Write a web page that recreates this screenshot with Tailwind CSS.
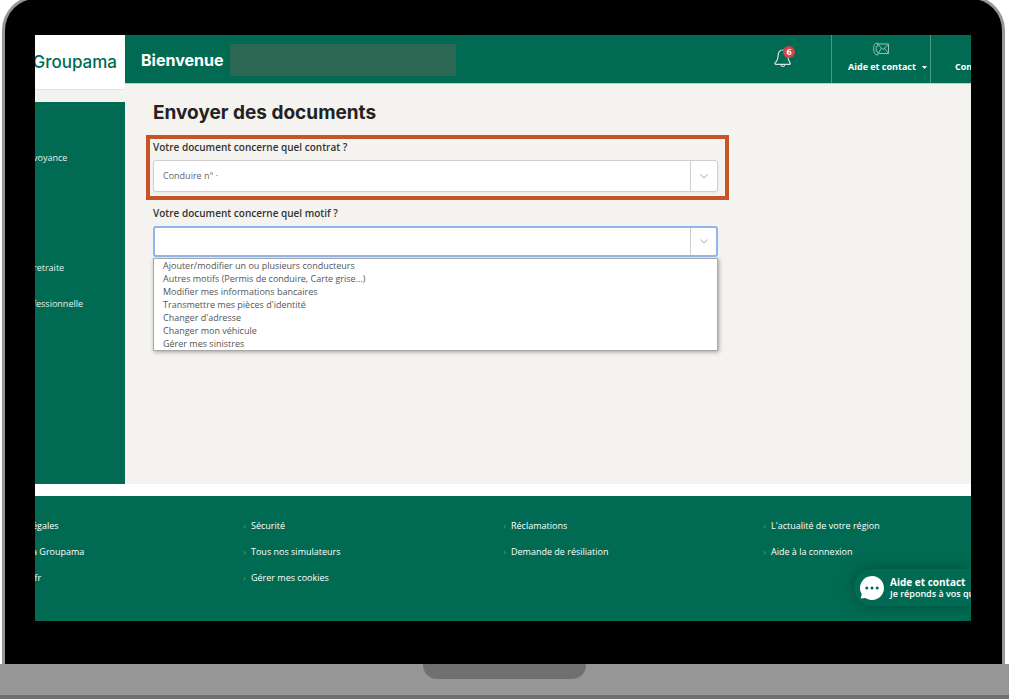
<!DOCTYPE html>
<html lang="fr">
<head>
    <meta charset="UTF-8">
    <meta name="viewport" content="width=device-width, initial-scale=1.0">
    <title>Groupama - Envoyer des documents</title>
    <script src="https://cdn.jsdelivr.net/npm/@tailwindcss/browser@4"></script>
</head>
<body class="bg-white overflow-hidden font-['Open_Sans',sans-serif] text-[10px] leading-4">

    <!-- Laptop lid -->
    <div class="ml-[2px] mr-1 -mt-1 rounded-t-[34px] border-x-[3px] border-t-[3px] border-[#979797] bg-black pl-[30px] pr-[31px] pt-9 pb-[43px]">

        <div class="relative overflow-hidden bg-white">
            <div class="flex min-h-[449px] bg-[#f5f3ef]">

                <aside class="w-[90px] shrink-0 flex flex-col">
                    <a href="#" class="h-[55px] bg-white border-b border-[#e4e2de] flex items-center justify-end pr-2 font-[Inter,sans-serif] text-[17px] font-medium text-[#006b52]">Groupama</a>
                    <nav class="mt-3 flex-1 bg-[#006b52] pt-12 text-[9px] text-white/90">
                        <ul class="-ml-[2px]">
                            <li class="mb-[94px]"><a href="#">voyance</a></li>
                            <li class="mb-5"><a href="#">retraite</a></li>
                            <li><a href="#">fessionnelle</a></li>
                        </ul>
                    </nav>
                </aside>

                <div class="flex-1 min-w-0">
                    <header class="h-[49px] bg-[#006b52] border-b border-[#b5d3ca] flex items-stretch pl-4 text-white">
                        <div class="flex items-center gap-[7px] pt-px">
                            <span class="font-[Inter,sans-serif] text-base font-bold">Bienvenue</span>
                            <span class="w-[226px] h-8 bg-[#2c6853]"></span>
                        </div>
                        <div class="ml-auto flex items-stretch">
                            <button type="button" aria-label="Notifications" class="relative w-[57px] flex items-center">
                                <svg class="w-[18px] h-5" viewBox="0 0 18 20" fill="none" stroke="#cfe6df" stroke-width="1.2" stroke-linecap="round" stroke-linejoin="round">
                                    <path d="M9 1C5.600 1 4.200 3.600 4.200 6.500C4.200 11 2.500 12.200 1 14.200C.8 14.800 1.200 15.300 1.800 15.300H15.600C16.200 15.300 16.500 14.800 16.200 14.200C15 12.300 13.800 11 13.800 6.500C13.800 3.600 12.300 1 9 1Z"/>
                                    <path d="M7 16C7.300 18 10.300 18 10.700 16"/>
                                </svg>
                                <span class="absolute left-[9px] top-[11px] size-3 rounded-full bg-[#d2434b] text-[9px] leading-3 font-bold">6</span>
                            </button>
                            <button type="button" class="w-[100px] border-x border-[#4d9786] flex flex-col items-center pt-[7px] text-[9px] font-bold">
                                <svg class="w-4 h-[14px]" viewBox="0 0 16 14" fill="none" stroke="#9fd0c2" stroke-width="0.9" stroke-linejoin="round">
                                    <path d="M4.500 2H15.500V11.500H6"/>
                                    <path d="M5 2.500L10 7.500L15.200 2.500M5.500 11L8.300 6.300M15.200 11L11.500 6.300"/>
                                    <path d="M4.500 1C2 .8.7 3 .7 6.800C.7 10.500 2 13.200 4.700 13L5.300 10.200L3.500 9.500C3 8 3 6 3.500 4.500L5.200 3.800L4.500 1Z"/>
                                </svg>
                                <span class="mt-[3px] flex w-full items-center pl-4">Aide et contact
                                    <svg class="ml-auto mr-[3px] w-[5px] h-[3px]" viewBox="0 0 5 3" fill="white"><path d="M0 0H5L2.500 3Z"/></svg>
                                </span>
                            </button>
                            <button type="button" class="w-10 overflow-hidden pl-6 pt-[15px] text-left text-[9px] font-bold">Connexion</button>
                        </div>
                    </header>

                    <main class="max-w-[604px] pt-4 pl-[21px] text-[#333]">
                        <h1 class="ml-[7px] h-[26px] leading-[26px] font-[Inter,sans-serif] text-[19px] font-bold text-[#222]">Envoyer des documents</h1>

                        <form>
                            <div class="mt-[9px] border-4 border-[#c55527] pl-[3px] pr-[7px] pb-1">
                                <label for="contrat" class="block mb-1 leading-[17px] font-semibold">Votre document concerne quel contrat ?</label>
                                <div class="relative">
                                    <select id="contrat" class="block w-full h-8 appearance-none rounded-[3px] border border-[#cfcfcf] bg-white pl-[9px] text-[9px] text-[#666] shadow-xs">
                                        <option>Conduire n° ·</option>
                                    </select>
                                    <span class="pointer-events-none absolute inset-y-px right-px w-[27px] border-l border-[#cfcfcf] flex items-center justify-center">
                                        <svg class="w-2 h-[5px]" viewBox="0 0 8 5" fill="none" stroke="#c4c4c4" stroke-width="1.100"><path d="M.5.5L4 4L7.500.5"/></svg>
                                    </span>
                                </div>
                            </div>

                            <div class="mt-[5px] pl-[7px] pr-[11px]">
                                <label for="motif" class="block mb-1 leading-[17px] font-semibold">Votre document concerne quel motif ?</label>
                                <div class="relative">
                                    <select id="motif" class="block w-full h-[31px] appearance-none rounded-[3px] border-2 border-[#8fb4ee] bg-white pl-2 text-[9px] text-[#666]">
                                        <option></option>
                                    </select>
                                    <span class="pointer-events-none absolute inset-y-[2px] right-px w-[27px] border-l border-[#cfcfcf] flex items-center justify-center">
                                        <svg class="w-2 h-[5px]" viewBox="0 0 8 5" fill="none" stroke="#c4c4c4" stroke-width="1.100"><path d="M.5.5L4 4L7.500.5"/></svg>
                                    </span>
                                </div>
                                <ul role="listbox" aria-label="Motifs" class="mt-px border border-[#a9aaa6] bg-white pl-[9px] text-[9px] leading-[13px] text-[#555] shadow-[1px_1px_4px_rgba(0,0,0,0.35)]">
                                    <li role="option">Ajouter/modifier un ou plusieurs conducteurs</li>
                                    <li role="option">Autres motifs (Permis de conduire, Carte grise...)</li>
                                    <li role="option">Modifier mes informations bancaires</li>
                                    <li role="option">Transmettre mes pièces d'identité</li>
                                    <li role="option">Changer d'adresse</li>
                                    <li role="option">Changer mon véhicule</li>
                                    <li role="option">Gérer mes sinistres</li>
                                </ul>
                            </div>
                        </form>
                    </main>
                </div>
            </div>

            <footer class="mt-3 h-[125px] bg-[#006b52] pt-[22px] text-[9px] text-white">
                <div class="-mx-[52px] grid grid-cols-4">
                    <ul class="pl-[49px] space-y-[10px]">
                        <li><a href="#">égales</a></li>
                        <li><a href="#">a Groupama</a></li>
                        <li><a href="#">.fr</a></li>
                    </ul>
                    <ul class="space-y-[10px]">
                        <li class="flex"><span class="w-2 text-[#8a8a3c]">›</span><a href="#">Sécurité</a></li>
                        <li class="flex"><span class="w-2 text-[#8a8a3c]">›</span><a href="#">Tous nos simulateurs</a></li>
                        <li class="flex"><span class="w-2 text-[#8a8a3c]">›</span><a href="#">Gérer mes cookies</a></li>
                    </ul>
                    <ul class="space-y-[10px]">
                        <li class="flex"><span class="w-2 text-[#8a8a3c]">›</span><a href="#">Réclamations</a></li>
                        <li class="flex"><span class="w-2 text-[#8a8a3c]">›</span><a href="#">Demande de résiliation</a></li>
                    </ul>
                    <ul class="space-y-[10px]">
                        <li class="flex"><span class="w-2 text-[#8a8a3c]">›</span><a href="#">L'actualité de votre région</a></li>
                        <li class="flex"><span class="w-2 text-[#8a8a3c]">›</span><a href="#">Aide à la connexion</a></li>
                    </ul>
                </div>
            </footer>

            <!-- Chat button -->
            <button type="button" class="absolute right-0 bottom-[15px] w-[117px] h-[37px] rounded-l-full bg-[#006b52] shadow-[0_0_14px_rgba(0,50,38,0.5)] pl-[6px] flex items-center gap-[6px] text-left text-white whitespace-nowrap">
                <svg class="size-6 shrink-0" viewBox="0 0 24 24">
                    <path fill="white" d="M12 0A12 12 0 1 1 5.500 22.100L.6 22.500L1.800 18.300A12 12 0 0 1 12 0Z"/>
                    <g fill="#006b52"><circle cx="6.800" cy="12" r="1.500"/><circle cx="12" cy="12" r="1.500"/><circle cx="17.200" cy="12" r="1.500"/></g>
                </svg>
                <span class="leading-3">
                    <span class="block text-[10px] font-bold">Aide et contact</span>
                    <span class="block text-[9px] font-semibold">Je réponds à vos questions</span>
                </span>
            </button>
        </div>
    </div>

    <!-- Laptop base -->
    <div class="h-[35px] bg-[#969696] border-b-4 border-[#707070]">
        <div class="mx-auto w-[163px] h-[15px] rounded-b-[14px] bg-[#707070]"></div>
    </div>

</body>
</html>
